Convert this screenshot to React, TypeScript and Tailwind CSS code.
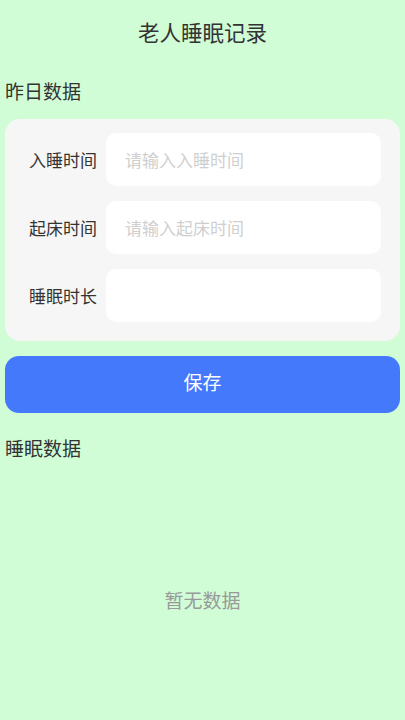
export default function App() {
  const rows = [
    { label: "入睡时间", ph: "请输入入睡时间" },
    { label: "起床时间", ph: "请输入起床时间" },
    { label: "睡眠时长", ph: "" },
  ];
  return (
    <div
      className="w-[405px] h-[720px] bg-[#d1fdd6] flex flex-col"
      style={{ fontFamily: '"Noto Sans CJK SC", "Noto Sans", sans-serif' }}
    >
      <div className="h-[64px] flex items-center justify-center text-[21.5px] text-[#333]">
        老人睡眠记录
      </div>
      <div className="h-[55px] flex items-center px-[5px] text-[19px] text-[#333]">
        昨日数据
      </div>
      <div className="mx-[5px] bg-[#f6f6f6] rounded-[15px] pt-[14px] pb-[19px] pl-[24px] pr-[19px] flex flex-col gap-[15px]">
        {rows.map((r) => (
          <div key={r.label} className="flex items-center gap-[10px]">
            <div className="w-[67px] text-[17px] text-[#333] whitespace-nowrap">{r.label}</div>
            <div className="flex-1 h-[53px] bg-white rounded-[10px] flex items-center pl-[19px] text-[17px] text-[#cfcfcf]">
              {r.ph}
            </div>
          </div>
        ))}
      </div>
      <div className="mx-[5px] mt-[15px] h-[57px] bg-[#4479fc] rounded-[14px] flex items-center justify-center text-white text-[19px] pb-[4px]">
        保存
      </div>
      <div className="h-[70px] flex items-center px-[5px] text-[19px] text-[#333]">
        睡眠数据
      </div>
      <div className="flex-1 flex items-start justify-center pt-[103px] text-[19px] text-[#999]">
        暂无数据
      </div>
    </div>
  );
}
